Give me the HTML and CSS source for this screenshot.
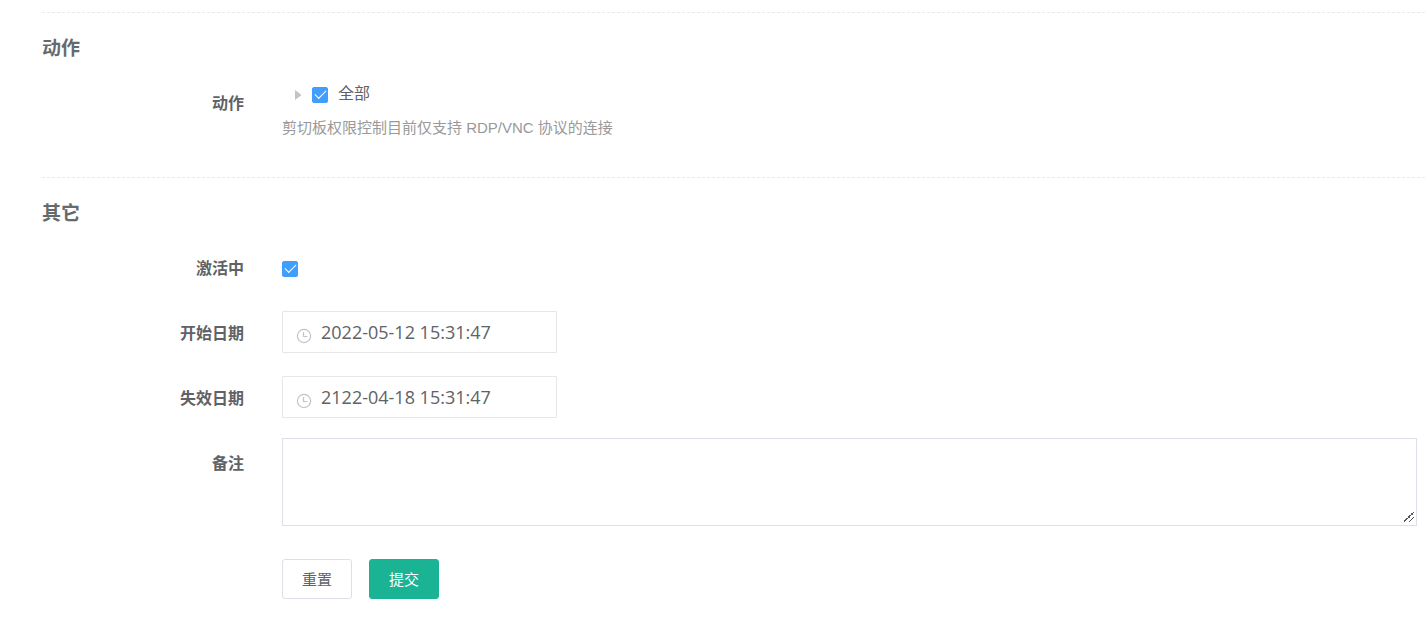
FILE: index.html
```html
<!DOCTYPE html>
<html lang="zh-CN">
    <head>
        <meta charset="UTF-8" />
        <meta name="viewport" content="width=device-width, initial-scale=1" />
        <title>动作</title>
        <link rel="stylesheet" href="styles.css">
    </head>
    <body>
        <form class="form">
            <section class="group">
                <h2 class="group-title">动作</h2>
                <div class="field">
                    <label class="field-label" for="actions">动作</label>
                    <div class="field-content">
                        <div class="tree-node">
                            <svg class="tree-arrow" viewBox="0 0 6 10" aria-hidden="true">
                                <path d="M0 0 L6.5 5 L0 10 Z" />
                            </svg>
                            <input class="checkbox" type="checkbox" id="actions" checked />
                            <label class="tree-label" for="actions">全部</label>
                        </div>
                        <p class="help">剪切板权限控制目前仅支持 RDP/VNC 协议的连接</p>
                    </div>
                </div>
            </section>

            <section class="group">
                <h2 class="group-title">其它</h2>
                <div class="field">
                    <label class="field-label" for="active">激活中</label>
                    <div class="field-content check-content">
                        <input class="checkbox" type="checkbox" id="active" checked />
                    </div>
                </div>
                <div class="field">
                    <label class="field-label" for="dateStart">开始日期</label>
                    <div class="field-content">
                        <div class="date-box">
                            <svg class="clock" viewBox="0 0 16 16" aria-hidden="true">
                                <circle cx="8" cy="8" r="6.6" />
                                <path d="M7.5 4 V8.5 H11.5" />
                            </svg>
                            <input class="date-input" type="text" id="dateStart" value="2022-05-12 15:31:47" />
                        </div>
                    </div>
                </div>
                <div class="field">
                    <label class="field-label" for="dateExpired">失效日期</label>
                    <div class="field-content">
                        <div class="date-box">
                            <svg class="clock" viewBox="0 0 16 16" aria-hidden="true">
                                <circle cx="8" cy="8" r="6.6" />
                                <path d="M7.5 4 V8.5 H11.5" />
                            </svg>
                            <input class="date-input" type="text" id="dateExpired" value="2122-04-18 15:31:47" />
                        </div>
                    </div>
                </div>
                <div class="field field-comment">
                    <label class="field-label" for="comment">备注</label>
                    <div class="field-content">
                        <textarea class="textarea" id="comment"></textarea>
                    </div>
                </div>
                <div class="actions">
                    <button class="btn" type="reset">重置</button>
                    <button class="btn btn-primary" type="submit">提交</button>
                </div>
            </section>
        </form>
    </body>
</html>
```

FILE: styles.css
```css
* {
    box-sizing: border-box;
}
body {
    margin: 0;
    background: #fff;
    color: #606266;
    font-family: "Liberation Sans", "Noto Sans CJK SC", sans-serif;
    font-size: 16px;
}
.form {
    padding: 12px 0 0 42px;
}
.group {
    padding: 23px 10px 19px 0;
    /* dashed rule, 3px on and 2px off */
    background: repeating-linear-gradient(90deg, #e7eaec 0 3px, #fff 3px 5px) top left / 100% 1px no-repeat;
}
.group-title {
    margin: 0 0 18px;
    color: #676a6c;
    font-size: 19px;
    line-height: 28px;
}
.field {
    display: grid;
    grid-template-columns: 202px 1fr;
    column-gap: 38px;
    margin-bottom: 19px;
}
.field-label {
    font-weight: bold;
    line-height: 46px;
    text-align: right;
}
.tree-node {
    display: flex;
    align-items: center;
    height: 28px;
    padding-left: 13px;
}
.tree-arrow {
    width: 6px;
    height: 10px;
    margin-right: 11px;
    fill: #c0c4cc;
}
.tree-label {
    padding-left: 10px;
    line-height: 24px;
    padding-bottom: 2px;
}
.checkbox {
    appearance: none;
    display: grid;
    place-items: center;
    width: 16px;
    height: 16px;
    margin: 0;
    border: 1px solid #dcdfe6;
    border-radius: 2px;
    background: #fff;
}
.checkbox:checked {
    border-color: #409eff;
    background: #409eff;
}
.checkbox:checked::after {
    content: "";
    width: 10px;
    height: 5px;
    border: solid #fff;
    border-width: 0 0 1px 1px;
    transform: translateY(-2px) rotate(-45deg);
}
.help {
    margin: 8px 0 0;
    color: #999;
    font-size: 15px;
    line-height: 22px;
}
.check-content {
    display: flex;
    align-items: center;
}
.date-box {
    display: flex;
    align-items: center;
    width: 275px;
    height: 42px;
    padding-left: 13px;
    border: 1px solid #e5e6e7;
    border-radius: 1px;
}
.clock {
    flex: none;
    width: 16px;
    height: 16px;
    margin: 8px 9px 0 0;
    fill: none;
    stroke: #c0c4cc;
    stroke-width: 1.2;
}
.date-input {
    flex: 1;
    min-width: 0;
    padding: 0;
    border: 0;
    outline: 0;
    background: none;
    color: #606266;
    font-family: "Open Sans", sans-serif;
    font-size: 18px;
}
.field-comment {
    margin-top: -22px;
    padding-top: 19px;
}
.field-comment .field-label {
    padding-top: 3px;
}
.textarea {
    display: block;
    width: 100%;
    height: 88px;
    padding: 5px 15px;
    border: 1px solid #dcdfe6;
    outline: 0;
    font: inherit;
    resize: vertical;
}
.textarea::-webkit-resizer {
    background: linear-gradient(135deg, transparent 45%, #555 45% 55%, transparent 55% 71%, #555 71% 80%, transparent 80%) 3px 2px / 10px 10px no-repeat;
}
.actions {
    display: flex;
    gap: 17px;
    padding: 14px 0 0 240px;
}
.btn {
    height: 40px;
    padding: 0 19px 2px;
    border: 1px solid #dcdfe6;
    border-radius: 3px;
    background: #fff;
    color: #606266;
    font-family: inherit;
    font-size: 15px;
    cursor: pointer;
}
.btn-primary {
    border-color: #1ab394;
    background: #1ab394;
    color: #fff;
}
```
